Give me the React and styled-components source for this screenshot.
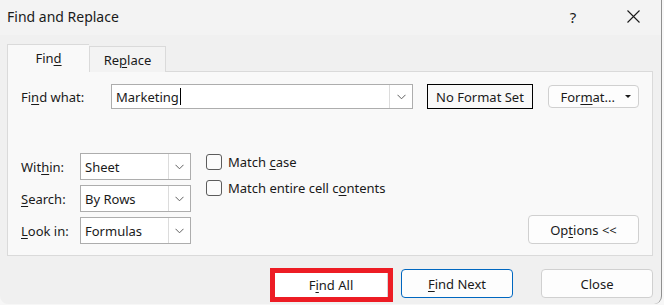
import React from 'react'
import styled, { createGlobalStyle, css } from 'styled-components'

const GlobalStyle = createGlobalStyle`
  html, body {
    margin: 0;
    padding: 0;
    background: #f7f7f7;
  }
  body {
    font-family: "Segoe UI", "Noto Sans", "Open Sans", sans-serif;
    color: #000;
  }
`

const Chevron = () => (
  <svg width="9" height="6" viewBox="0 0 9 6">
    <polyline points="0.5,0.8 4.5,4.8 8.5,0.8" fill="none" stroke="#606060" strokeWidth="1" />
  </svg>
)

const CloseIcon = () => (
  <svg width="13" height="13" viewBox="0 0 13 13">
    <path d="M0.5 0.5 L12.5 12.5 M12.5 0.5 L0.5 12.5" stroke="#1a1a1a" strokeWidth="1.1" />
  </svg>
)

const App = () => {
  return (
    <>
      <GlobalStyle />
      <Window>
        <TitleBar>
          <Title>Find and Replace</Title>
          <TitleActions>
            <Help>?</Help>
            <CloseBox><CloseIcon /></CloseBox>
          </TitleActions>
        </TitleBar>
        <Body>
          <Tabs>
            <Tab active><span>Fin<u>d</u></span></Tab>
            <Tab><span>Re<u>p</u>lace</span></Tab>
          </Tabs>
          <Panel>
            <FindRow>
              <FindLabel>Fi<u>n</u>d what:</FindLabel>
              <Combo width={302} height={25}>
                <ComboText>Marketing<Caret /></ComboText>
                <ComboArrow width={22}><Chevron /></ComboArrow>
              </Combo>
              <FormatPreview>No Format Set</FormatPreview>
              <FormatButton>
                <span>For<u>m</u>at...</span>
                <DropTriangle />
              </FormatButton>
            </FindRow>
            <OptionsArea>
              <SelectGrid>
                <Label>Wit<u>h</u>in:</Label>
                <Combo width={111} height={27}>
                  <ComboText>Sheet</ComboText>
                  <ComboArrow width={21}><Chevron /></ComboArrow>
                </Combo>
                <Label><u>S</u>earch:</Label>
                <Combo width={111} height={27}>
                  <ComboText>By Rows</ComboText>
                  <ComboArrow width={21}><Chevron /></ComboArrow>
                </Combo>
                <Label><u>L</u>ook in:</Label>
                <Combo width={111} height={27}>
                  <ComboText>Formulas</ComboText>
                  <ComboArrow width={21}><Chevron /></ComboArrow>
                </Combo>
              </SelectGrid>
              <Checks>
                <CheckRow><Box /><span>Match <u>c</u>ase</span></CheckRow>
                <CheckRow><Box /><span>Match entire cell c<u>o</u>ntents</span></CheckRow>
              </Checks>
              <Spacer />
              <Button width={111} height={29}><span>Op<u>t</u>ions &lt;&lt;</span></Button>
            </OptionsArea>
          </Panel>
          <Footer>
            <Highlight>
              <Button width={113} height={24} flat><span>F<u>i</u>nd All</span></Button>
            </Highlight>
            <Button width={112} height={29} primary><span><u>F</u>ind Next</span></Button>
            <Button width={112} height={29} gap={28}>Close</Button>
          </Footer>
        </Body>
      </Window>
    </>
  )
}

const Window = styled.div`
  width: 661px;
  height: 304px;
  background: #f0f0f0;
  border-right: 1px solid #8f8f8f;
  border-bottom-left-radius: 8px;
  border-bottom-right-radius: 8px;
  overflow: hidden;
  display: flex;
  flex-direction: column;
  font-size: 13px;

  u {
    text-decoration: underline;
    text-underline-offset: 2px;
    text-decoration-thickness: 1px;
  }
`

const TitleBar = styled.div`
  height: 35px;
  flex: none;
  display: flex;
  align-items: center;
  justify-content: space-between;
  padding-left: 7px;
  background: #f3f3f3;
`

const Title = styled.div`
  font-size: 14px;
  color: #1a1a1a;
  margin-top: -2px;
`

const TitleActions = styled.div`
  display: flex;
  align-items: center;
  height: 100%;
`

const Help = styled.div`
  width: 46px;
  text-align: center;
  font-size: 15px;
  color: #1a1a1a;
  margin-top: -2px;
  margin-right: 14px;
`

const CloseBox = styled.div`
  width: 46px;
  height: 100%;
  display: flex;
  align-items: center;
  justify-content: center;
  margin-right: 5px;
  margin-top: -2px;
`

const Body = styled.div`
  flex: 1;
  display: flex;
  flex-direction: column;
  padding: 9px 8px 0 7px;
`

const Tabs = styled.div`
  display: flex;
  align-items: flex-end;
  height: 28px;
  margin-bottom: -1px;
  position: relative;
  z-index: 1;
`

const Tab = styled.div`
  height: 26px;
  width: 77px;
  display: flex;
  align-items: center;
  justify-content: center;
  background: #f3f3f3;
  border: 1px solid #dadada;
  border-bottom: none;
  box-sizing: border-box;
  color: #1a1a1a;
  ${p => p.active && css`
    width: 82px;
    height: 28px;
    background: #f9f9f9;
    padding-bottom: 2px;
    border-right: none;
  `}
`

const Panel = styled.div`
  height: 185px;
  box-sizing: border-box;
  background: #f9f9f9;
  border: 1px solid #dadada;
  padding: 12px 13px 11px 13px;
  display: flex;
  flex-direction: column;
`

const FindRow = styled.div`
  display: flex;
  align-items: center;
  height: 25px;
`

const FindLabel = styled.div`
  width: 90px;
  flex: none;
  color: #1a1a1a;
`

const Combo = styled.div`
  width: ${p => p.width}px;
  height: ${p => p.height}px;
  box-sizing: border-box;
  border: 1px solid #adadad;
  background: #fff;
  display: flex;
  flex: none;
`

const ComboText = styled.div`
  flex: 1;
  display: flex;
  align-items: center;
  padding-left: 4px;
  color: #1a1a1a;
`

const Caret = styled.span`
  display: inline-block;
  width: 1px;
  height: 17px;
  background: #000;
  margin-left: 1px;
`

const ComboArrow = styled.div`
  width: ${p => p.width}px;
  display: flex;
  align-items: center;
  justify-content: center;
  border-left: 1px solid #dcdcdc;
  background: #fff;
`

const FormatPreview = styled.div`
  width: 106px;
  height: 25px;
  box-sizing: border-box;
  border: 1.5px solid #000;
  margin-left: 14px;
  display: flex;
  align-items: center;
  justify-content: center;
  color: #1a1a1a;
  flex: none;
`

const FormatButton = styled.div`
  width: 91px;
  height: 23px;
  box-sizing: border-box;
  margin-left: 15px;
  border: 1px solid #d0d0d0;
  border-radius: 4px;
  background: #fdfdfd;
  display: flex;
  align-items: center;
  justify-content: flex-end;
  gap: 10px;
  padding-right: 7px;
  color: #1a1a1a;
  flex: none;
`

const DropTriangle = styled.span`
  width: 0;
  height: 0;
  border-left: 3px solid transparent;
  border-right: 3px solid transparent;
  border-top: 3px solid #1a1a1a;
`

const OptionsArea = styled.div`
  margin-top: auto;
  display: flex;
  align-items: flex-end;
`

const SelectGrid = styled.div`
  display: grid;
  grid-template-columns: 59px 111px;
  grid-auto-rows: 27px;
  row-gap: 5px;
  align-items: center;
`

const Label = styled.div`
  color: #1a1a1a;
`

const Checks = styled.div`
  align-self: flex-start;
  margin-left: 15px;
  margin-top: 1px;
  display: flex;
  flex-direction: column;
  gap: 10px;
`

const CheckRow = styled.div`
  display: flex;
  align-items: center;
  gap: 6px;
  height: 16px;
  color: #1a1a1a;
`

const Box = styled.span`
  width: 16px;
  height: 16px;
  box-sizing: border-box;
  border: 1px solid #5c5c5c;
  border-radius: 3px;
  background: #fbfbfb;
`

const Spacer = styled.div`
  flex: 1;
`

const Button = styled.div`
  width: ${p => p.width}px;
  height: ${p => p.height}px;
  box-sizing: border-box;
  margin-left: ${p => p.gap || 0}px;
  border: 1px solid #d0d0d0;
  border-radius: 4px;
  background: #fdfdfd;
  display: flex;
  align-items: center;
  justify-content: center;
  color: #1a1a1a;
  flex: none;
  ${p => p.primary && css`
    border-color: #0067c0;
  `}
  ${p => p.flat && css`
    border: none;
    border-right: 1px solid #d6d6d6;
    border-radius: 0;
    background: #fff;
  `}
`

const Highlight = styled.div`
  border: 5px solid #ed1c24;
  margin-right: 8px;
  margin-top: -1px;
  display: flex;
`

const Footer = styled.div`
  display: flex;
  justify-content: flex-end;
  align-items: flex-start;
  padding-top: 13px;
`

export default App
